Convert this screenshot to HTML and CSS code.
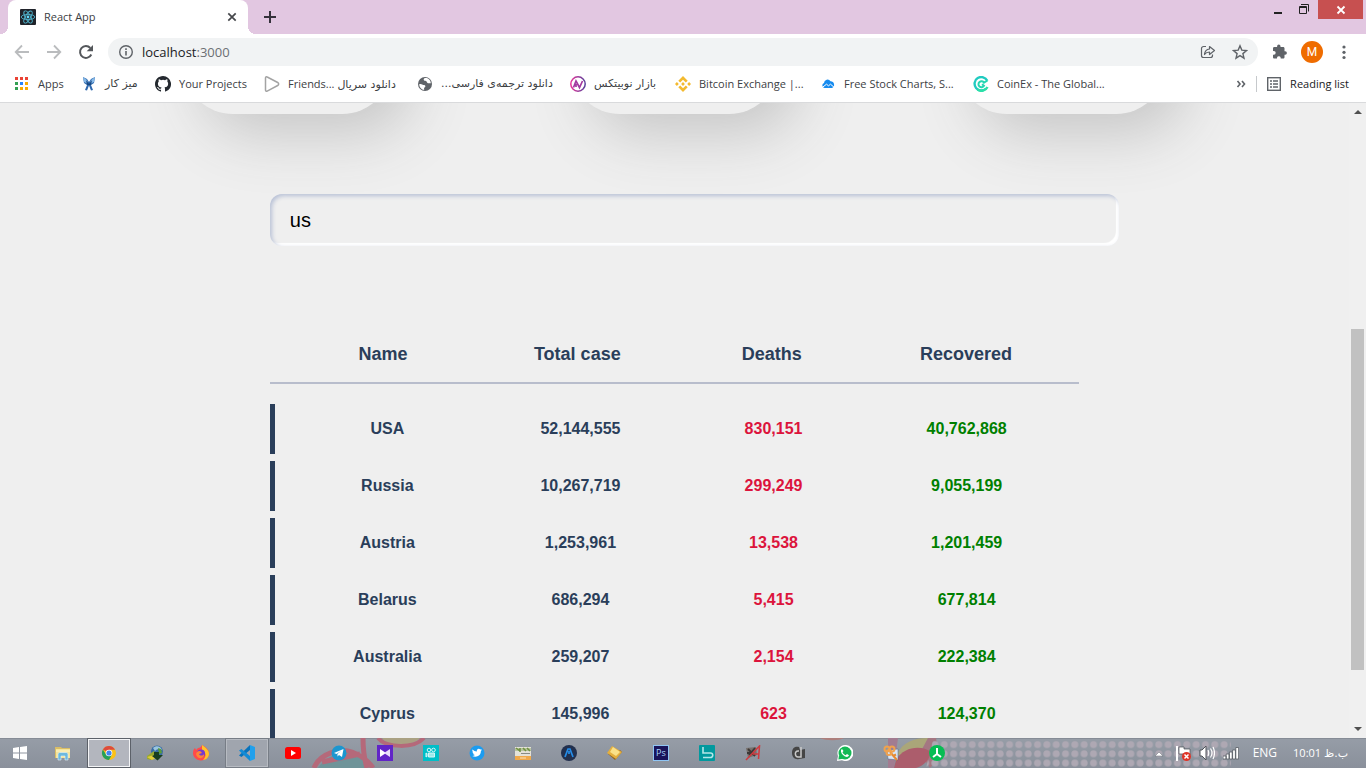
FILE: index.html
```html
<!DOCTYPE html>
<html lang="en">
<head>
<meta charset="utf-8">
<title>React App</title>
<link rel="stylesheet" href="styles.css">
</head>
<body>
<header class="browser">
  <div class="tabstrip">
    <div class="tab">
      <svg class="icon" viewBox="0 0 16 16"><rect width="16" height="16" rx="1" fill="#20232a"/><g fill="none" stroke="#4fb3cc" stroke-width=".9"><ellipse cx="8" cy="8" rx="6.8" ry="2.6"/><ellipse cx="8" cy="8" rx="6.8" ry="2.6" transform="rotate(60 8 8)"/><ellipse cx="8" cy="8" rx="6.8" ry="2.6" transform="rotate(120 8 8)"/></g><circle cx="8" cy="8" r="1.4" fill="#61dafb"/></svg>
      <span class="tab-title">React App</span>
      <button class="icon-btn" aria-label="Close tab"><svg class="icon" viewBox="0 0 16 16"><path d="M4.3 4.3l7.4 7.4M11.7 4.3l-7.4 7.4" stroke="#45474b" stroke-width="1.7"/></svg></button>
    </div>
    <button class="icon-btn new-tab" aria-label="New tab"><svg class="icon" viewBox="0 0 16 16"><path d="M8 2v12M2 8h12" stroke="#35313b" stroke-width="2"/></svg></button>
    <div class="window-controls">
      <button class="win-btn" aria-label="Minimize"><svg class="icon" viewBox="0 0 16 16"><path d="M4 11h8" stroke="#222" stroke-width="2"/></svg></button>
      <button class="win-btn" aria-label="Restore"><svg class="icon" viewBox="0 0 16 16"><path d="M3.500 4.500h7v7h-7zM3 5.500h8M5 2.500h7.500v7" fill="none" stroke="#222"/></svg></button>
      <button class="win-btn win-close" aria-label="Close"><svg class="icon" viewBox="0 0 16 16"><path d="M4.500 4.500l7 7M11.500 4.500l-7 7" stroke="#fff" stroke-width="1.8"/></svg></button>
    </div>
  </div>
  <div class="toolbar">
    <button class="icon-btn" aria-label="Back"><svg class="icon" viewBox="0 0 16 16"><path d="M15 8H2M8 1.500L1.700 8 8 14.500" fill="none" stroke="#babcbe" stroke-width="1.8"/></svg></button>
    <button class="icon-btn" aria-label="Forward"><svg class="icon" viewBox="0 0 16 16"><path d="M1 8h13M8 1.500L14.300 8 8 14.500" fill="none" stroke="#babcbe" stroke-width="1.8"/></svg></button>
    <button class="icon-btn" aria-label="Reload"><svg class="icon" viewBox="0 0 16 16"><path d="M13.300 10.500A5.900 5.900 0 1 1 12.300 4" fill="none" stroke="#54575b" stroke-width="2"/><path d="M15 1v6.300H8.700z" fill="#54575b"/></svg></button>
    <div class="omnibox">
      <svg class="icon" viewBox="0 0 16 16"><circle cx="8" cy="8" r="6.300" fill="none" stroke="#5f6368" stroke-width="1.400"/><path d="M8 7v4.500M8 4.300v1.700" stroke="#5f6368" stroke-width="1.600"/></svg>
      <span class="url">localhost<span class="port">:3000</span></span>
      <button class="icon-btn" aria-label="Share"><svg class="icon" viewBox="0 0 16 16"><g fill="none" stroke="#5f6368" stroke-width="1.200" stroke-linejoin="round"><path d="M6 2.500H3.500a2 2 0 0 0-2 2v7a2 2 0 0 0 2 2h7a2 2 0 0 0 2-2v-1"/><path d="M4.500 10.500c.3-3.300 2-5.200 5-5.500V2.500L14.500 6.500l-5 4V8c-2.200 0-3.800.8-5 2.500z"/></g></svg></button>
      <button class="icon-btn" aria-label="Bookmark"><svg class="icon" viewBox="0 0 16 16"><path d="M8 1.800l1.800 4.300 4.700.4-3.600 3.100 1.100 4.600L8 11.700l-4 2.500 1.100-4.600L1.500 6.500l4.700-.4z" fill="none" stroke="#5f6368" stroke-width="1.400"/></svg></button>
    </div>
    <button class="icon-btn" aria-label="Extensions"><svg class="icon" viewBox="0 0 16 16"><path d="M13.200 7.300h-.7V4.200c0-.7-.6-1.300-1.300-1.300H8.500V2.200a1.700 1.700 0 0 0-3.400 0v.7H2.300C1.600 2.900 1 3.500 1 4.200v2.700h.8a1.900 1.900 0 0 1 0 3.800H1v2.600c0 .7.600 1.300 1.300 1.300H5v-.8a1.900 1.900 0 0 1 3.700 0v.8h2.500c.7 0 1.300-.6 1.300-1.300v-2.600h.7a1.700 1.700 0 0 0 0-3.400z" fill="#5f6368"/></svg></button>
    <button class="avatar" aria-label="Profile">M</button>
    <button class="icon-btn" aria-label="Menu"><svg class="icon" viewBox="0 0 16 16"><g fill="#5f6368"><circle cx="8" cy="3" r="1.600"/><circle cx="8" cy="8.300" r="1.600"/><circle cx="8" cy="13.500" r="1.600"/></g></svg></button>
  </div>
  <nav class="bookmarks" aria-label="Bookmarks">
    <div class="bookmark-list">
      <a href="#"><svg class="icon" viewBox="0 0 16 16"><path d="M1 1h3v3H1zM6 1h3v3H6zM11 1h3v3h-3z" fill="#ea4335"/><path d="M1 6h3v3H1z" fill="#34a053"/><path d="M6 6h3v3H6z" fill="#2684fc"/><path d="M11 6h3v3h-3zM6 11h3v3H6zM11 11h3v3h-3z" fill="#f9ab00"/><path d="M1 11h3v3H1z" fill="#34a053"/></svg><span>Apps</span></a>
      <a href="#"><svg class="icon" viewBox="0 0 16 16"><path d="M2 1l4 2 2 3 2-3 4-2-1 6-3 2 2 5-2 .5-2-5-2 5L4 14l2-5-3-2z" fill="#2e68ae"/><path d="M2 1l4 3 1 4-4-2zM14 1l-4 3-1 4 4-2z" fill="#86b9e8"/><path d="M5 4l3 4 3-4-1 5H6z" fill="#18477f"/></svg><span lang="fa" dir="rtl">میز کار</span></a>
      <a href="#"><svg class="icon" viewBox="0 0 16 16"><path d="M8 0C3.580 0 0 3.580 0 8c0 3.540 2.290 6.530 5.470 7.590.4.070.55-.17.55-.38v-1.490c-2.010.37-2.530-.49-2.690-.94-.09-.23-.48-.94-.82-1.130-.28-.15-.68-.52-.01-.53.63-.01 1.080.58 1.230.82.72 1.210 1.870.87 2.330.66.07-.52.280-.87.510-1.070-1.780-.2-3.640-.89-3.640-3.950 0-.87.310-1.590.820-2.150-.08-.2-.36-1.020.08-2.120 0 0 .67-.21 2.200.82a7.600 7.600 0 0 1 4 0c1.530-1.040 2.200-.82 2.200-.82.440 1.100.16 1.920.08 2.120.51.560.82 1.270.82 2.150 0 3.070-1.870 3.750-3.650 3.950.29.250.54.730.54 1.480v2.200c0 .21.15.46.55.38A8 8 0 0 0 8 0z" fill="#24292f"/></svg><span>Your Projects</span></a>
      <a href="#"><svg class="icon" viewBox="0 0 16 16"><path d="M1.500 2v12c0 1 .8 1.500 1.700 1.100l10.500-5.600c1.300-.7 1.300-2.300 0-3L3.200 1C2.300.5 1.500 1 1.500 2z" fill="none" stroke="#a3a3a3" stroke-width="1.500"/></svg><span>Friends... <bdi lang="fa">دانلود سریال</bdi></span></a>
      <a href="#"><svg class="icon" viewBox="0 0 16 16"><circle cx="8" cy="8" r="7" fill="#5f6368"/><path d="M8 2c-2 .8-1.500 2.800.2 2.800 1.500 0 1.300 1.500 2.300 2.100s1.900.1 3.300.4c.2-3-2.600-6-5.800-5.300zM2.200 8.200c1.200-.5 2.300-.3 3 .3 1 .8 2.800.2 3.200 1.500.3 1-.9 1.100-1.300 2.200-.2.700 0 1.200.2 1.700-2.800-.2-5-2.700-5.100-5.700z" fill="#fff"/></svg><span lang="fa" dir="rtl">دانلود ترجمه‌ی فارسی...</span></a>
      <a href="#"><svg class="icon" viewBox="0 0 16 16"><defs><linearGradient id="avg"><stop stop-color="#e8359a"/><stop offset="1" stop-color="#57419a"/></linearGradient></defs><circle cx="8" cy="8" r="7.200" fill="none" stroke="url(#avg)" stroke-width="1.500"/><path d="M3.500 11.500L6 5l3.500 6.500L12.500 5M6 11V8" fill="none" stroke="#a33aa0" stroke-width="1.700"/></svg><span lang="fa" dir="rtl">بازار نوبیتکس</span></a>
      <a href="#"><svg class="icon" viewBox="0 0 16 16"><g fill="#f3ba2f"><path d="M8 0L3.300 4.700 5.200 6.500 8 3.700l2.800 2.800 1.900-1.800zM0 8l1.900-1.900L3.800 8 1.900 9.900zM6.100 8L8 6.100 9.900 8 8 9.900zM12.200 8l1.900-1.900L16 8l-1.900 1.900zM8 16l-4.700-4.700 1.900-1.800L8 12.300l2.800-2.800 1.900 1.800z"/></g></svg><span>Bitcoin Exchange |...</span></a>
      <a href="#"><svg class="icon" viewBox="0 0 16 16"><path d="M4.500 12a2.600 2.600 0 0 1-.5-5 3.500 3.500 0 0 1 6.500-1.700A3.500 3.500 0 0 1 12 12z" fill="#168bef"/><path d="M2 11.700l4.500-3.500 2 1.600 2-1.600 3.500 3" fill="none" stroke="#fff"/></svg><span>Free Stock Charts, S...</span></a>
      <a href="#"><svg class="icon" viewBox="0 0 16 16"><g fill="none" stroke-width="2.400"><path d="M14.300 4.800A6.700 6.700 0 1 0 13 12.500" stroke="#20cbc0"/><path d="M4.500 13.500a6.700 6.700 0 0 0 10-2.500" stroke="#2be0a8"/><path d="M14.500 4.500L11 6.600A3 3 0 1 0 11 9.800L9 8.200" stroke="#24d6b2" stroke-width="2"/></g></svg><span>CoinEx - The Global...</span></a>
    </div>
    <button class="icon-btn" aria-label="More bookmarks"><svg class="icon" viewBox="0 0 16 16"><path d="M4.500 5L7 8l-2.500 3M9 5l2.500 3L9 11" fill="none" stroke="#5f6368" stroke-width="1.600"/></svg></button>
    <a class="reading" href="#"><svg class="icon" viewBox="0 0 16 16"><rect x="1.700" y="1.700" width="12.600" height="12.600" fill="none" stroke="#5f6368" stroke-width="1.400"/><path d="M4 5h2M4 8h2M4 11h2M7 5h5M7 8h5M7 11h5" stroke="#5f6368" stroke-width="1.400"/></svg><span>Reading list</span></a>
  </nav>
</header>

<div class="viewport">
  <main class="page">
    <section class="cards" aria-label="Summary">
      <div class="card"></div><div class="card"></div><div class="card"></div>
    </section>
    <section class="content">
      <input class="search" type="text" value="us" aria-label="Search country">
      <table class="countries">
        <thead><tr><th>Name</th><th>Total case</th><th>Deaths</th><th>Recovered</th></tr></thead>
        <tbody>
          <tr><td>USA</td><td>52,144,555</td><td class="deaths">830,151</td><td class="recovered">40,762,868</td></tr>
          <tr><td>Russia</td><td>10,267,719</td><td class="deaths">299,249</td><td class="recovered">9,055,199</td></tr>
          <tr><td>Austria</td><td>1,253,961</td><td class="deaths">13,538</td><td class="recovered">1,201,459</td></tr>
          <tr><td>Belarus</td><td>686,294</td><td class="deaths">5,415</td><td class="recovered">677,814</td></tr>
          <tr><td>Australia</td><td>259,207</td><td class="deaths">2,154</td><td class="recovered">222,384</td></tr>
          <tr><td>Cyprus</td><td>145,996</td><td class="deaths">623</td><td class="recovered">124,370</td></tr>
        </tbody>
      </table>
    </section>
  </main>
  <div class="scrollbar" aria-hidden="true">
    <svg viewBox="0 0 17 17"><path d="M5 11h8L9 7z" fill="#505050"/></svg>
    <div class="track"><div class="thumb"></div></div>
    <svg viewBox="0 0 17 17"><path d="M5 6h8l-4 4z" fill="#505050"/></svg>
  </div>
</div>

<footer class="taskbar">
  <svg class="wallpaper" viewBox="0 0 1366 30" preserveAspectRatio="xMinYMin slice" aria-hidden="true">
    <defs><pattern id="dots" x="930.300" y="2" width="9.330" height="9.200" patternUnits="userSpaceOnUse"><circle cx="4.600" cy="4.600" r="3.500" fill="#aea8b3"/></pattern></defs>
    <path d="M318 30c10-14 28-20 40-12 6 4 8 8 9 12z" fill="#6f9499"/>
    <path d="M314 30c6-15 26-20 38-16 11 4 17 10 21 16M322 24l38-8M363 0c0 10 1 20 4 30" fill="none" stroke="#b5697a" stroke-width="5"/>
    <path d="M382 0c6 9 30 9 38 0z" fill="#aaa183"/>
    <path d="M378 0c8 10 36 11 46 0" fill="none" stroke="#b5697a" stroke-width="4"/>
    <path d="M820 0h24c-5 3-18 3-24 0z" fill="#ad7f7c"/>
    <path d="M888 0h10l-4 30h-6z" fill="#a27c91"/>
    <path d="M897 17C902 4 914 0 928 0c-2 11-12 17-31 17z" fill="#aaa679"/>
    <path d="M928 0h8l3 20-9 10-10-15z" fill="#a47782"/>
    <path d="M896 22c8-14 26-15 35-8-2 9-8 14-15 16h-22z" fill="#ac5d6c"/>
    <path d="M933 2h298v28H926z" fill="url(#dots)"/>
  </svg>
  <div class="apps">
    <button class="start" aria-label="Start"><svg class="icon" viewBox="0 0 16 16"><path d="M1 3l6-1v5.500H1zM8 1.900L15 1v6.500H8zM1 8.500h6V14l-6-1zM8 8.500h7V15l-7-.9z" fill="#fff"/></svg></button>
    <button class="app" aria-label="File Explorer"><svg class="icon" viewBox="0 0 16 16"><path d="M0 2h6l1 1h8v10H0z" fill="#d9bd66"/><path d="M1 4h14v9H1z" fill="#f4e49b"/><path d="M1 6h14" stroke="#fff6c9"/><path d="M3 15V9.500C3 8 4 7.500 5 7.500h6c1 0 2 .5 2 2V15h-3v-4H6v4z" fill="#6cb9df" stroke="#e3f4fb" stroke-width=".6"/></svg></button>
    <button class="app active" aria-label="Chrome"><svg class="icon" viewBox="0 0 16 16"><circle cx="8" cy="8" r="7" fill="#fbc116"/><path d="M8 8L1.900 4.500A7 7 0 0 1 14.100 4.800H8z" fill="#dd4b3e"/><path d="M1.900 4.500A7 7 0 0 0 8 15l3-5.500L5 9.500z" fill="#26a05a"/><circle cx="8" cy="8" r="3.300" fill="#fff"/><circle cx="8" cy="8" r="2.600" fill="#4385ed"/></svg></button>
    <button class="app" aria-label="Download Manager"><svg class="icon" viewBox="0 0 16 16"><circle cx="10" cy="6.500" r="6" fill="#376ca5"/><path d="M6 3c3-3 8-2 9 2-3-2-5-1-7 1z" fill="#9bc5df"/><path d="M0 11l7-5 3 4-6 5-4-1z" fill="#98a92e"/><path d="M0 12l5 3 4-2-2-3z" fill="#e3cd39"/><path d="M11 3l3 1 1 4-3 1z" fill="#5a9c3a"/><path d="M7 7h5v3h4l-5.500 5.500L5 11l2-1z" fill="#183e20"/></svg></button>
    <button class="app" aria-label="Firefox"><svg class="icon" viewBox="0 0 16 16"><path d="M9 0c5 3 7 5 7 9a8 7 0 0 1-16-1c0-3 1-4 2-5l1 2 2-2c2 0 3-1 4-3z" fill="#ff4a4b"/><path d="M9 0c4 3 7 5 7 9 0 3-3 6-6 6 4-4 3-8-1-10z" fill="#ffc329"/><circle cx="8" cy="8.500" r="4" fill="#743bd0"/><path d="M4 7c2-2 4-1 5 1l-3 1c1 2 4 2 5 0 1 5-7 6-8 0z" fill="#ff8435"/></svg></button>
    <button class="app open" aria-label="Visual Studio Code"><svg class="icon" viewBox="0 0 16 16"><path d="M11 0l5 2v12l-5 2V0z" fill="#21a0ec"/><path d="M11 0v5L2.500 12 0 10.500z" fill="#0873bc"/><path d="M11 16v-5L2.500 4 0 5.500z" fill="#138bd6"/></svg></button>
    <button class="app" aria-label="YouTube"><svg class="icon" viewBox="0 0 16 16"><rect y="2" width="16" height="12" rx="2.500" fill="#f00"/><path d="M6 5l5 3-5 3z" fill="#fff"/></svg></button>
    <button class="app" aria-label="Telegram"><svg class="icon" viewBox="0 0 16 16"><circle cx="8" cy="8" r="7.500" fill="#1c96cf"/><path d="M3 8l9.500-4L11 12l-3-2-1.500 1.500V9L10 6 5.500 9z" fill="#fff"/></svg></button>
    <button class="app" aria-label="Media player"><svg class="icon" viewBox="0 0 16 16"><path d="M0 0h16v16H0z" fill="#6124c7"/><path d="M3 4l6 4-6 4z" fill="#fff"/><path d="M13 4L7 8l6 4z" fill="#e9defa"/></svg></button>
    <button class="app" aria-label="Video recorder"><svg class="icon" viewBox="0 0 16 16"><path d="M0 0h16v16H0z" fill="#00bfc8"/><g fill="none" stroke="#d5f7f8"><circle cx="6" cy="5" r="1.800"/><circle cx="10.500" cy="5" r="1.800"/><path d="M5.500 8h6v4h-6zM4.500 9L3 8v4l1.500-1" fill="#9de8ea"/></g></svg></button>
    <button class="app" aria-label="Twitter"><svg class="icon" viewBox="0 0 16 16"><circle cx="8" cy="8" r="7.500" fill="#1c9cf0"/><path d="M3.500 4.500c1.300 1.300 2.600 2 4.300 2C7.500 3.800 10 3 11.300 4.500l1.500-.5-.8 1.300.9-.2-1 1c0 5-4.800 6.800-8.700 4.800 1 0 2-.3 2.700-.9-1-.1-1.600-.7-1.900-1.400h.8C3.700 8 3.400 7 3.400 6.500l.8.200C3.300 6 3 5.200 3.500 4.500z" fill="#fff"/></svg></button>
    <button class="app" aria-label="Notes"><svg class="icon" viewBox="0 0 16 16"><path d="M0 2h16v13H0z" fill="#e4e2d8"/><path d="M0 3h16v3H0z" fill="#b9c4a0"/><path d="M1 3l4 3M5 3v4M8 3l3 3M12 3l3 3" stroke="#6f9140" stroke-width="1.500"/><path d="M6 8.500h9" stroke="#8a8c84"/><path d="M0 11h16v4H0z" fill="#f0a94b"/><path d="M5 13h6" stroke="#fbe2bb"/></svg></button>
    <button class="app" aria-label="A launcher"><svg class="icon" viewBox="0 0 16 16"><circle cx="8" cy="8" r="8" fill="#22304e"/><path d="M4 12L7 4h2l3 8M8 6v3" fill="none" stroke="#258ce8" stroke-width="1.700"/></svg></button>
    <button class="app" aria-label="Archive"><svg class="icon" viewBox="0 0 16 16"><path d="M1 9l7 6 7-8-2-2z" fill="#93631f"/><path d="M0 8l5-7 10 6-6 7z" fill="#e4af3d"/><path d="M3 7l3-5 7 5-4 4z" fill="#fae188"/></svg></button>
    <button class="app" aria-label="Photoshop"><svg class="icon" viewBox="0 0 16 16"><rect x=".5" y=".5" width="15" height="15" fill="#19145a" stroke="#8fc5f4"/><text class="logo-text" x="3" y="11">Ps</text></svg></button>
    <button class="app" aria-label="Bookshelf"><svg class="icon" viewBox="0 0 16 16"><rect width="16" height="16" rx="1" fill="#01999e"/><path d="M4 2v6h7.500a2 2 0 0 1 0 4.500H4" fill="none" stroke="#b2e6e8" stroke-width="1.600"/></svg></button>
    <button class="app" aria-label="Audio tool"><svg class="icon" viewBox="0 0 16 16"><path d="M1 3l10-1 1 8-9 3z" fill="#77716d"/><path d="M3 4l7 7M10 3L4 10M2 8h7" stroke="#3c3836" stroke-width="1.800"/><path d="M1 15L14.500 1l-1 13M8 9h6" fill="none" stroke="#cf3a40" stroke-width="1.500"/></svg></button>
    <button class="app" aria-label="D reader"><svg class="icon" viewBox="0 0 16 16"><path d="M8 2C3 1 1 4 1 8s3 7 7 6l6-1V4l-5 1z" fill="#454545"/><path d="M10 2v10H7c-3 0-4-6 0-6h1" fill="none" stroke="#c9c9c9" stroke-width="1.500"/></svg></button>
    <button class="app" aria-label="WhatsApp"><svg class="icon" viewBox="0 0 16 16"><path d="M8 0a8 8 0 1 1-3 15.200L0 16l1-5A8 8 0 0 1 8 0z" fill="#fff"/><circle cx="8" cy="8" r="6.500" fill="#14b955"/><path d="M2 10l-.6 4.500L6 13.700z" fill="#14b955"/><path d="M5 4l1.500 2-1 1.300c1 1.800 2 2.500 3 2.900L10 9l2 1.200c-1 2-2 2-4 1.200C5 10 3.500 7 4 5z" fill="#fff"/></svg></button>
    <button class="app" aria-label="Key manager"><svg class="icon" viewBox="0 0 16 16"><path d="M4 5l11-1v11l-10-1z" fill="#d9e5f4" stroke="#51647e" stroke-width=".5"/><path d="M7 7l7 8M10 11l3-1.500" stroke="#e78c33" stroke-width="2"/><g fill="none" stroke="#f0a24e" stroke-width="2"><circle cx="4" cy="4" r="2.500"/><circle cx="9" cy="4" r="2.500"/><circle cx="6" cy="7.500" r="2.500"/></g></svg></button>
    <button class="app" aria-label="Green client"><svg class="icon" viewBox="0 0 16 16"><circle cx="8" cy="8" r="8" fill="#06bd53"/><path d="M8 3v6M8 9l-4 3M8 9l4 3" stroke="#fff" stroke-width="2"/></svg></button>
  </div>
  <div class="tray">
    <svg class="icon" viewBox="0 0 16 16"><path d="M4 11h8L8 7z" fill="#fff" stroke="#666c75" stroke-width=".5"/></svg>
    <svg class="icon" viewBox="0 0 16 16"><path d="M2 1v15" stroke="#fff" stroke-width="2"/><path d="M4 2h5v2h6v6H9V9H4z" fill="#fff" stroke="#4b4e53" stroke-width=".7"/><circle cx="11.500" cy="11.500" r="4.500" fill="#df3528"/><path d="M9.500 9.500l4 4M13.500 9.500l-4 4" stroke="#fff" stroke-width="1.500"/></svg>
    <svg class="icon" viewBox="0 0 16 16"><path d="M1 5h2l4-4v14l-4-4H1z" fill="#fff" stroke="#50545a"/><path d="M9 5c1 2 1 4 0 6M11.500 3.500c2 3 2 6 0 9M14 2c2 4 2 8 0 12" fill="none" stroke="#fff" stroke-width="1.200"/></svg>
    <svg class="icon" viewBox="0 0 16 16"><path d="M0 11h3v3H0zM3.200 9H6v5H3.200zM6.400 7h2.800v7H6.400zM9.600 5h2.800v9H9.600zM12.800 2.500h2.800V14h-2.800z" fill="#fff" stroke="#555a62" stroke-width=".8"/></svg>
    <span class="lang">ENG</span>
    <time class="clock">10:01 <bdi lang="fa">ب.ظ</bdi></time>
  </div>
</footer>
</body>
</html>
```

FILE: styles.css
```css
* { box-sizing: border-box; }

body {
  margin: 0;
  height: 100vh;
  display: flex;
  flex-direction: column;
  overflow: hidden;
  background: #efefef;
  color: #3c4043;
  font: 11px/16px "Open Sans", "DejaVu Sans", sans-serif;
}

button {
  padding: 0;
  border: 0;
  background: none;
  color: inherit;
  font: inherit;
}

a { color: inherit; text-decoration: none; }

.icon {
  display: block;
  flex: none;
  width: 16px;
  height: 16px;
}

[lang="fa"] { font-family: "DejaVu Sans", sans-serif; }

/* Browser chrome */
.browser {
  flex: none;
  background: #fff;
  border-bottom: 1px solid #d9dadc;
}

.tabstrip {
  display: flex;
  height: 34px;
  padding-left: 8px;
  background: #e2c7e1;
}

.tab {
  position: relative;
  display: flex;
  align-items: center;
  gap: 8px;
  width: 240px;
  padding: 0 8px 0 12px;
  background: #fff;
  border-radius: 8px 8px 0 0;
}

.tab::before,
.tab::after {
  content: "";
  position: absolute;
  bottom: 0;
  width: 8px;
  height: 8px;
}

.tab::before {
  left: -8px;
  background: radial-gradient(circle at 0 0, #e2c7e1 8px, #fff 8px);
}

.tab::after {
  right: -8px;
  background: radial-gradient(circle at 100% 0, #e2c7e1 8px, #fff 8px);
}

.tab-title { flex: 1; }

.icon-btn {
  flex: none;
  width: 16px;
  height: 16px;
}

.new-tab { margin: 9px 14px; }

.window-controls {
  display: flex;
  margin-left: auto;
  padding-right: 3px;
}

.win-btn {
  display: flex;
  align-items: center;
  justify-content: center;
  width: 26px;
  height: 19px;
}

.win-close {
  width: 45px;
  margin-left: 1px;
  background: #c75050;
}

.toolbar {
  display: flex;
  align-items: center;
  gap: 16px;
  height: 36px;
  padding: 0 14px;
}

.omnibox {
  flex: 1;
  display: flex;
  align-items: center;
  gap: 16px;
  height: 28px;
  margin: 0 -2px;
  padding: 0 10px;
  background: #f1f3f4;
  border-radius: 14px;
}

.url {
  flex: 1;
  margin-left: -8px;
  color: #202124;
  font-size: 13px;
}

.port { color: #6b6f73; }

.avatar {
  width: 22px;
  height: 22px;
  margin: 0 -3px;
  border-radius: 50%;
  background: #ef6c00;
  color: #fff;
  font-family: Roboto, sans-serif;
  font-size: 12px;
}

.bookmarks {
  display: flex;
  align-items: center;
  height: 32px;
  padding: 0 14px;
}

.bookmarks a {
  display: flex;
  align-items: center;
  gap: 8px;
  padding-bottom: 4px;
  white-space: nowrap;
}

.bookmarks > .icon-btn { margin-bottom: 4px; }

.bookmark-list {
  flex: 1;
  display: grid;
  grid-template-columns: 67px 74px 109px 153px 153px 105px 145px 153px 153px;
}

.bookmarks .reading {
  margin-left: 7px;
  padding-right: 3px;
  color: #202124;
}

.reading::before {
  content: "";
  width: 1px;
  height: 16px;
  margin-right: 1px;
  background: #c6c9cc;
}

/* Page */
.viewport {
  flex: 1;
  display: flex;
  min-height: 0;
  overflow: hidden;
}

.page {
  flex: 1;
  min-width: 0;
  overflow: hidden;
  font-family: "Liberation Sans", Arial, sans-serif;
  font-weight: bold;
  color: #2a3e5a;
}

.cards {
  display: grid;
  grid-template-columns: repeat(3, 1fr);
  justify-items: center;
  width: 86%;
  height: 200px;
  margin: -189px auto 80px;
}

.card {
  width: 54%;
  border-radius: 50px;
  background: #efefef;
  box-shadow: 20px 20px 60px #c6c6c6;
}

.content {
  width: 60%;
  margin: 0 auto;
}

.search {
  display: block;
  box-sizing: content-box;
  width: 100%;
  height: 52px;
  padding: 0 20px;
  border: 0;
  border-radius: 12px;
  outline: 0;
  background: transparent;
  box-shadow: inset 2px 2px 4px #b8c1d6, inset -3px -3px 1px #fff;
  color: #000;
  font: 20px "Liberation Sans", Arial, sans-serif;
}

.countries {
  display: block;
  margin-top: 80px;
  font-size: 16px;
  text-align: center;
}

.countries thead,
.countries tbody { display: block; }

.countries tr {
  display: grid;
  grid-template-columns: repeat(4, 1fr);
  align-items: center;
  padding: 0 16px;
}

.countries th,
.countries td { padding: 0; }

.countries thead tr {
  height: 58px;
  border-bottom: 2px solid #b8bdcc;
  font-size: 18px;
}

.countries tbody {
  display: grid;
  gap: 7px;
  margin-top: 20px;
}

.countries tbody tr {
  height: 50px;
  border-left: 5px solid #2a3e5a;
}

.deaths { color: crimson; }
.recovered { color: green; }

.scrollbar {
  display: flex;
  flex-direction: column;
  flex: none;
  width: 17px;
  background: #f0f0f0;
}

.scrollbar svg {
  width: 17px;
  height: 17px;
}

.track {
  flex: 1;
  display: flex;
  flex-direction: column;
  justify-content: flex-end;
  padding: 0 2px 51px;
}

.thumb {
  height: 62%;
  background: #c1c1c1;
}

/* Taskbar */
.taskbar {
  position: relative;
  flex: none;
  display: flex;
  justify-content: space-between;
  height: 30px;
  background: linear-gradient(#969da7, #8a909b);
  box-shadow: inset 0 1px #868c96;
  color: #fff;
}

.wallpaper {
  position: absolute;
  inset: 0;
  width: 100%;
  height: 100%;
}

.apps,
.tray {
  position: relative;
  display: flex;
  align-items: center;
}

.apps { gap: 2px; }

.start,
.app {
  display: flex;
  align-items: center;
  justify-content: center;
  width: 44px;
  height: 30px;
  border: 1px solid transparent;
}

.start { width: 39px; }

.active {
  border-color: #5c6169;
  background: #b3b6be;
  box-shadow: inset 0 0 0 1px #f3f4f6;
}

.open {
  border-color: #777d86;
  background: #a0a5ae;
  box-shadow: inset 0 0 0 1px #b7bbc2;
}

.logo-text {
  fill: #a9d5fa;
  font: 9px "Open Sans", sans-serif;
}

.tray {
  gap: 8px;
  padding-right: 18px;
}

.lang { margin-left: 6px; font-size: 12px; }
.clock { margin-left: 8px; }
```
